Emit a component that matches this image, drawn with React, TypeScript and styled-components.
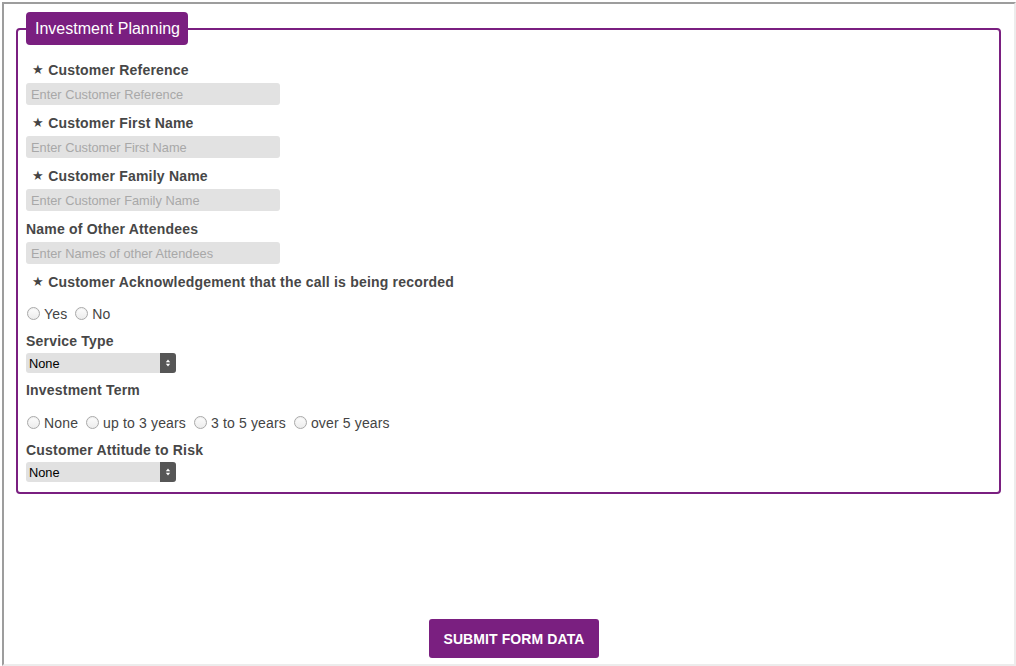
import React from "react";
import styled, { createGlobalStyle } from "styled-components";

const PURPLE = "#7a1f80";

const Global = createGlobalStyle`
  html, body { margin: 0; padding: 0; background: #fff; }
  body { font-family: "Liberation Sans", Arial, Helvetica, sans-serif; }
  * { box-sizing: border-box; }
`;

const Frame = styled.div`
  margin: 2px 0 0 2px;
  width: 1014px;
  height: 664px;
  border-style: solid;
  border-width: 2px;
  border-color: #9d9d9d #ececec #ececec #9d9d9d;
  display: flex;
  flex-direction: column;
`;

const FieldSet = styled.fieldset`
  margin: 8px 13px 0 12px;
  padding: 17px 8px 10px 8px;
  border: 2px solid ${PURPLE};
  border-radius: 4px;
  min-width: 0;
`;

const Legend = styled.legend`
  background: ${PURPLE};
  color: #fff;
  font-size: 16px;
  height: 33px;
  line-height: 33px;
  padding: 0 8px 0 9px;
  border-radius: 4px;
  margin: 0;
`;

const Label = styled.label<{ $mb?: number }>`
  display: block;
  height: 17px;
  font-size: 14px;
  font-weight: bold;
  line-height: 17px;
  color: #474747;
  margin-bottom: ${(p) => (p.$mb ?? 4)}px;
  letter-spacing: 0.2px;
  white-space: nowrap;
`;

const Star = styled.span`
  position: relative;
  top: -1px;
  font-size: 13px;
  line-height: 1;
  font-weight: normal;
  margin: 0 4px 0 6px;
  color: #444;
`;

const TextInput = styled.input`
  display: block;
  width: 254px;
  height: 22px;
  border: none;
  border-radius: 3px;
  background: #e2e2e2;
  padding: 0 5px;
  font-family: inherit;
  font-size: 12.8px;
  color: #333;
  margin: 0 0 10px 0;
  outline: none;
  &::placeholder { color: #a8a8a8; }
`;

const RadioRow = styled.div<{ $mt: number }>`
  display: flex;
  align-items: center;
  height: 17px;
  margin: ${(p) => p.$mt}px 0 11px 0;
`;

const RadioOption = styled.label`
  display: inline-flex;
  align-items: center;
  gap: 4px;
  margin-right: 7px;
  font-size: 14px;
  letter-spacing: 0.15px;
  color: #444;
  cursor: pointer;
`;

const RadioDot = styled.input`
  appearance: none;
  -webkit-appearance: none;
  width: 13px;
  height: 13px;
  margin: 0 0 0 1px;
  border-radius: 50%;
  border: 1px solid #a9a9a9;
  background: linear-gradient(#fdfdfd, #ececec);
  box-shadow: inset 0 1px 1px rgba(0,0,0,0.06);
  &:checked { background: radial-gradient(circle, #555 0 3px, #f4f4f4 3.5px); }
`;

const SelectWrap = styled.div<{ $mb: number }>`
  position: relative;
  width: 150px;
  height: 20px;
  margin-bottom: ${(p) => p.$mb}px;
`;

const Select = styled.select`
  appearance: none;
  -webkit-appearance: none;
  width: 150px;
  height: 20px;
  border: none;
  border-radius: 3px;
  background: #e1e1e1;
  padding: 0 20px 0 3px;
  font-family: inherit;
  font-size: 12.8px;
  color: #000;
  outline: none;
`;

const ArrowBox = styled.span`
  position: absolute;
  right: 0;
  top: 0;
  width: 16px;
  height: 20px;
  background: #565656;
  border-radius: 0 3px 3px 0;
  display: flex;
  align-items: center;
  justify-content: center;
  pointer-events: none;
`;

const Footer = styled.div`
  margin-top: auto;
  padding: 0 0 6px 10px;
  display: flex;
  justify-content: center;
`;

const SubmitButton = styled.button`
  height: 39px;
  padding: 0 14px;
  border: none;
  border-radius: 3px;
  background: ${PURPLE};
  color: #fff;
  font-family: inherit;
  font-size: 14px;
  font-weight: bold;
  letter-spacing: 0.1px;
  cursor: pointer;
`;

const Arrows = () => (
  <svg width="6" height="8" viewBox="0 0 6 8">
    <path d="M3 0.5 L5.2 3.2 H0.8 Z" fill="#fff" />
    <path d="M3 7.5 L5.2 4.8 H0.8 Z" fill="#fff" />
  </svg>
);

const TextField = ({ label, placeholder, required }: { label: string; placeholder: string; required?: boolean }) => (
  <div>
    <Label>
      {required && <Star>★</Star>}
      {label}
    </Label>
    <TextInput placeholder={placeholder} />
  </div>
);

const Radios = ({ name, options, mt }: { name: string; options: string[]; mt: number }) => (
  <RadioRow $mt={mt}>
    {options.map((o) => (
      <RadioOption key={o}>
        <RadioDot type="radio" name={name} />
        {o}
      </RadioOption>
    ))}
  </RadioRow>
);

const Dropdown = ({ mb }: { mb: number }) => (
  <SelectWrap $mb={mb}>
    <Select defaultValue="None">
      <option>None</option>
    </Select>
    <ArrowBox>
      <Arrows />
    </ArrowBox>
  </SelectWrap>
);

export default function App() {
  return (
    <>
      <Global />
      <Frame>
        <FieldSet>
          <Legend>Investment Planning</Legend>
          <TextField required label="Customer Reference" placeholder="Enter Customer Reference" />
          <TextField required label="Customer First Name" placeholder="Enter Customer First Name" />
          <TextField required label="Customer Family Name" placeholder="Enter Customer Family Name" />
          <TextField label="Name of Other Attendees" placeholder="Enter Names of other Attendees" />
          <Label>
            <Star>★</Star>
            Customer Acknowledgement that the call is being recorded
          </Label>
          <Radios name="ack" options={["Yes", "No"]} mt={14} />
          <Label $mb={3}>Service Type</Label>
          <Dropdown mb={9} />
          <Label>Investment Term</Label>
          <Radios name="term" options={["None", "up to 3 years", "3 to 5 years", "over 5 years"]} mt={15} />
          <Label $mb={3}>Customer Attitude to Risk</Label>
          <Dropdown mb={0} />
        </FieldSet>
        <Footer>
          <SubmitButton type="button">SUBMIT FORM DATA</SubmitButton>
        </Footer>
      </Frame>
    </>
  );
}
